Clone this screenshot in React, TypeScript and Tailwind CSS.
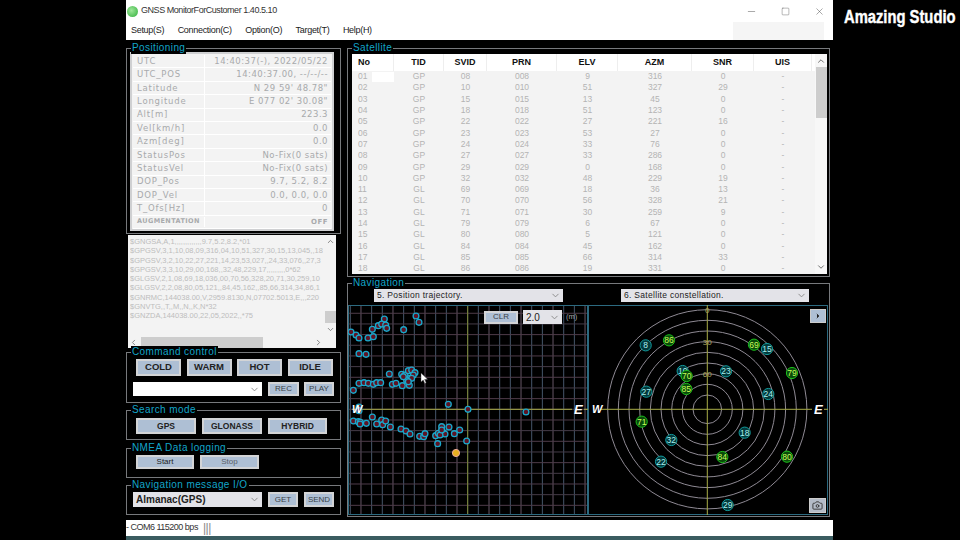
import React from 'react';
import { ChevronDown, ChevronUp, ChevronLeft, ChevronRight, Minus, Square, X, Camera } from 'lucide-react';

const font = "font-['Liberation_Sans',sans-serif]";
const mono = "font-['DejaVu_Sans',sans-serif]";

const posRows = [
  ['UTC', '14:40:37(-), 2022/05/22'],
  ['UTC_POS', '14:40:37.00, --/--/--'],
  ['Latitude', 'N  29 59\' 48.78"'],
  ['Longitude', 'E 077 02\' 30.08"'],
  ['Alt[m]', '223.3'],
  ['Vel[km/h]', '0.0'],
  ['Azm[deg]', '0.0'],
  ['StatusPos', 'No-Fix(0 sats)'],
  ['StatusVel', 'No-Fix(0 sats)'],
  ['DOP_Pos', '9.7, 5.2, 8.2'],
  ['DOP_Vel', '0.0, 0.0, 0.0'],
  ['T_Ofs[Hz]', '0'],
  ['AUGMENTATION', 'OFF'],
];

const nmea = [
  '$GNGSA,A,1,,,,,,,,,,,,,9.7,5.2,8.2,*01',
  '$GPGSV,3,1,10,08,09,316,04,10,51,327,30,15,13,045,,18',
  '$GPGSV,3,2,10,22,27,221,14,23,53,027,,24,33,076,,27,3',
  '$GPGSV,3,3,10,29,00,168,,32,48,229,17,,,,,,,,,0*62',
  '$GLGSV,2,1,08,69,18,036,00,70,56,328,20,71,30,259,10',
  '$GLGSV,2,2,08,80,05,121,,84,45,162,,85,66,314,34,86,1',
  '$GNRMC,144038.00,V,2959.8130,N,07702.5013,E,,,220',
  '$GNVTG,,T,,M,,N,,K,N*32',
  '$GNZDA,144038.00,22,05,2022,,*75',
];

const sats = [
  ['01', 'GP', '08', '008', '9', '316', '0'],
  ['02', 'GP', '10', '010', '51', '327', '29'],
  ['03', 'GP', '15', '015', '13', '45', '0'],
  ['04', 'GP', '18', '018', '51', '123', '0'],
  ['05', 'GP', '22', '022', '27', '221', '16'],
  ['06', 'GP', '23', '023', '53', '27', '0'],
  ['07', 'GP', '24', '024', '33', '76', '0'],
  ['08', 'GP', '27', '027', '33', '286', '0'],
  ['09', 'GP', '29', '029', '0', '168', '0'],
  ['10', 'GP', '32', '032', '48', '229', '19'],
  ['11', 'GL', '69', '069', '18', '36', '13'],
  ['12', 'GL', '70', '070', '56', '328', '21'],
  ['13', 'GL', '71', '071', '30', '259', '9'],
  ['14', 'GL', '79', '079', '6', '67', '0'],
  ['15', 'GL', '80', '080', '5', '121', '0'],
  ['16', 'GL', '84', '084', '45', '162', '0'],
  ['17', 'GL', '85', '085', '66', '314', '33'],
  ['18', 'GL', '86', '086', '19', '331', '0'],
];

// coordinates read off a 3x crop, see toChart
const track = [
  [118,117],[213,108],[222,127],[176,149],[100,137],[110,132],[122,135],[125,145],[82,148],[18,156],[33,165],[42,174],[69,174],[85,170],[42,221],[63,223],
  [133,282],[42,310],[57,308],[70,310],[85,313],[95,308],[107,308],[142,313],[153,310],[172,317],[193,316],[25,331],
  [170,283],[180,285],[190,272],[200,270],[210,278],[205,285],[195,295],[185,300],[175,290],[200,295],[190,305],
  [310,373],[369,388],[543,396],[42,381],[42,392],
  [25,423],[40,425],[46,427],[45,432],[64,430],[82,411],[95,432],[110,420],[113,434],[122,423],[136,441],[168,447],[183,453],[195,462],[224,469],[236,470],[240,461],
  [272,467],[280,460],[290,440],[295,458],[300,462],[285,465],[290,450],[312,441],[328,461],[344,450],[365,483],[278,491],
];

const constellation: [number, number, string, boolean][] = [
  [182, 196, '8', false],
  [252, 181, '86', true],
  [507, 194, '69', true],
  [546, 207, '15', false],
  [621, 279, '79', true],
  [293, 273, '10', false],
  [305, 288, '70', true],
  [304, 327, '85', true],
  [423, 274, '23', false],
  [184, 335, '27', false],
  [550, 342, '24', false],
  [170, 425, '71', true],
  [479, 458, '18', false],
  [259, 480, '32', false],
  [228, 545, '22', false],
  [412, 531, '84', true],
  [606, 530, '80', true],
  [428, 675, '29', false],
];

const toChart = (v: number) => v / 3;

function Group({ title, className, children }: { title: string; className?: string; children: React.ReactNode }) {
  return (
    <div className={`relative border border-[#77797c] ${className ?? ''}`}>
      <span className="absolute left-[4px] top-[-7px] whitespace-nowrap bg-black px-[1px] text-[10px] leading-[12px] tracking-[0.4px] text-[#12a5c9]">
        {title}
      </span>
      {children}
    </div>
  );
}

function Btn({ label, className }: { label: string; className?: string }) {
  return (
    <div className={`flex items-center justify-center border-2 border-[#d3d4d6] bg-[#aebfd4] whitespace-nowrap ${className ?? ''}`}>
      {label}
    </div>
  );
}

function Combo({ label, className }: { label?: string; className?: string }) {
  return (
    <div className={`flex items-center justify-between pl-[3px] pr-[2px] text-[#222] ${className ?? ''}`}>
      <span className="whitespace-nowrap">{label}</span>
      <ChevronDown size={11} className="text-[#888]" />
    </div>
  );
}

function CompassLetters() {
  return (
    <>
      <text x="4" y="108" fontSize="11" fontStyle="italic" fontWeight="700" fill="#fff" fontFamily="Liberation Sans">W</text>
      <text x="226" y="109" fontSize="13" fontStyle="italic" fontWeight="700" fill="#fff" fontFamily="Liberation Sans">E</text>
    </>
  );
}

function Trajectory() {
  const xs = Array.from({ length: 23 }, (_, i) => 2.3 + i * 10.67);
  const ys = Array.from({ length: 20 }, (_, i) => -2.4 + i * 10.67);
  return (
    <svg width="240" height="210" className="block">
      <rect width="240" height="210" fill="#000" />
      {xs.map((x, i) => (
        <line key={x} x1={x} y1="1" x2={x} y2="209" stroke={i % 3 === 1 ? '#665666' : '#45566a'} />
      ))}
      {ys.map((y, i) => (
        <line key={y} x1="1" y1={y} x2="239" y2={y} stroke={i % 2 ? '#4f3c4a' : '#453c48'} />
      ))}
      <rect x="0.5" y="0.5" width="239" height="209" fill="none" stroke="#2c6a80" />
      <line x1="119.7" y1="1" x2="119.7" y2="209" stroke="#7f8a34" />
      <line x1="4" y1="104.3" x2="224" y2="104.3" stroke="#a9ad48" />
      <line x1="236" y1="104.3" x2="240" y2="104.3" stroke="#a9ad48" />
      {track.map(([x, y], i) => (
        <circle key={i} cx={toChart(x) - 3} cy={toChart(y) - 25} r="2.9" fill="#5e1424" stroke="#1aa8cc" strokeWidth="1.3" />
      ))}
      <circle cx={toChart(333) - 3} cy={toChart(519) - 25} r="3.6" fill="#e8b020" stroke="#eba998" strokeWidth="1" />
      {/* mouse pointer */}
      <path d="M73 68 l0 9 l2.2 -2 l1.6 3.4 l1.4 -.7 l-1.6 -3.2 l3 -.2 z" fill="#fff" stroke="#333" strokeWidth="0.4" />
      <CompassLetters />
    </svg>
  );
}

function Constellation() {
  const cx = 119.3;
  const cy = 104.3;
  const radii = [14.3, 25, 35.6, 46.3, 57, 67.6, 78.3, 89, 99.6];
  return (
    <svg width="240" height="210" className="block">
      <rect x="0.5" y="0.5" width="239" height="209" fill="#000" stroke="#2c6a80" />
      {radii.map((r) => (
        <circle key={r} cx={cx} cy={cy} r={r} fill="none" stroke="#8f8a94" strokeWidth="1" />
      ))}
      <line x1={cx} y1="0" x2={cx} y2="210" stroke="#a9ad48" />
      <line x1="13" y1={cy} x2="224" y2={cy} stroke="#a9ad48" />
      <line x1="236" y1={cy} x2="240" y2={cy} stroke="#a9ad48" />
      <text x={cx} y="8" textAnchor="middle" fontSize="8" fill="#b0a860" fontFamily="Liberation Sans">0</text>
      <text x={cx} y="40" textAnchor="middle" fontSize="8" fill="#b0a860" fontFamily="Liberation Sans">30</text>
      <text x={cx} y="72" textAnchor="middle" fontSize="8" fill="#b0a860" fontFamily="Liberation Sans">60</text>
      {constellation.map(([x, y, label, gl]) => (
        <g key={label}>
          <circle cx={toChart(x) - 3} cy={toChart(y) - 25} r="5.6" fill={gl ? '#0a4a0a' : '#03383a'} stroke={gl ? '#1cc01c' : '#129a9c'} strokeWidth="1" />
          <text x={toChart(x) - 3} y={toChart(y) - 25 + 3} textAnchor="middle" fontSize="8.5" fill={gl ? '#c8ff5a' : '#a8f0f0'} fontFamily="Liberation Sans">
            {label}
          </text>
        </g>
      ))}
      <CompassLetters />
    </svg>
  );
}

export default function App() {
  return (
    <div className={`flex h-[540px] w-[960px] overflow-hidden bg-black ${font}`}>
      <div className="w-[126px] shrink-0" />
      <div className="flex w-[707px] shrink-0 flex-col">
        {/* title bar */}
        <div className="flex h-[22px] items-center bg-white pl-[1px]">
          <div className="h-[11px] w-[11px] rounded-full bg-[radial-gradient(circle_at_40%_40%,#9fe89a,#2fae3a)]" />
          <span className="ml-[3px] text-[9px] tracking-[-0.45px] text-[#333]">GNSS MonitorForCustomer 1.40.5.10</span>
          <div className="ml-auto flex items-center gap-[24px] pr-[8px] text-[#444]">
            <Minus size={11} strokeWidth={1} />
            <Square size={9} strokeWidth={1} />
            <X size={11} strokeWidth={1} />
          </div>
        </div>
        {/* menu */}
        <div className="flex h-[18px] items-center bg-white pl-[5px] text-[9px] tracking-[-0.3px] text-[#222]">
          <div className="flex gap-[13.5px]">
            <span>Setup(S)</span>
            <span>Connection(C)</span>
            <span>Option(O)</span>
            <span>Target(T)</span>
            <span>Help(H)</span>
          </div>
          <div className="ml-auto mr-[9px] h-full w-[91px] bg-[#f5f5f5]" />
        </div>

        <div className="flex h-[480px] gap-[6px] bg-black pt-[8px]">
          {/* left column */}
          <div className="flex w-[215px] shrink-0 flex-col">
            <Group title="Positioning" className="h-[186px] p-[3px]">
              <div className={`h-[179px] w-[204px] border-2 border-[#cfd0d2] bg-[#f3f3f3] p-[1px] tracking-[0.5px] text-[#a8aaac] ${mono}`}>
                {posRows.map(([k, v]) => (
                  <div key={k} className="flex h-[13.4px] items-center border-b border-white">
                    <span className={`w-[71px] whitespace-nowrap pl-[4px] ${k === 'AUGMENTATION' ? 'text-[6.5px] font-bold tracking-[0.4px]' : 'text-[8.5px] tracking-[0.8px]'}`}>{k}</span>
                    <span className={`flex-1 whitespace-nowrap border-l border-white pr-[3px] text-right ${k === 'AUGMENTATION' ? 'text-[7px] font-bold' : 'text-[8.5px]'}`}>{v}</span>
                  </div>
                ))}
              </div>
            </Group>

            {/* NMEA text */}
            <div className="relative ml-[2px] mt-[1px] h-[113px] w-[208px] overflow-hidden bg-[#f3f3f3] pl-[2px] pt-[2px]">
              {nmea.map((l) => (
                <div key={l} className="w-[193px] overflow-hidden whitespace-nowrap text-[7.5px] leading-[9.25px] text-[#bdbdbd]">
                  {l}
                </div>
              ))}
              <div className="absolute bottom-[12px] right-0 top-0 flex w-[12px] flex-col items-center">
                <ChevronUp size={9} className="mt-[2px] text-[#666]" />
                <div className="mt-[65px] h-[12px] w-[11px] bg-[#cdcdcd]" />
                <ChevronDown size={9} className="mt-[2px] text-[#666]" />
              </div>
              <div className="absolute bottom-0 left-0 right-[12px] flex h-[12px] items-center">
                <ChevronLeft size={9} className="ml-[1px] text-[#666]" />
                <div className="ml-[3px] h-[11px] w-[122px] bg-[#cdcdcd]" />
                <ChevronRight size={9} className="ml-auto mr-[1px] text-[#666]" />
              </div>
            </div>

            <Group title="Command control" className="mt-[4px] h-[51px]">
              <div className="flex gap-[5.5px] pl-[9px] pt-[6px] text-[9.5px] font-bold text-[#222]">
                <Btn label="COLD" className="h-[17px] w-[45px]" />
                <Btn label="WARM" className="h-[17px] w-[45px]" />
                <Btn label="HOT" className="h-[17px] w-[45px]" />
                <Btn label="IDLE" className="h-[17px] w-[45px]" />
              </div>
              <div className="mt-[6px] flex items-center pl-[6px] text-[8px] text-[#3a3f47]">
                <Combo className="h-[14px] w-[129px] bg-white" />
                <Btn label="REC" className="ml-[6px] h-[14px] w-[31px]" />
                <Btn label="PLAY" className="ml-[5px] h-[14px] w-[30px]" />
              </div>
            </Group>

            <Group title="Search mode" className="mt-[7px] h-[30px]">
              <div className="flex gap-[6px] pl-[9px] pt-[7px] text-[8.5px] font-bold text-[#222]">
                <Btn label="GPS" className="h-[16px] w-[60px]" />
                <Btn label="GLONASS" className="h-[16px] w-[60px]" />
                <Btn label="HYBRID" className="h-[16px] w-[59px]" />
              </div>
            </Group>

            <Group title="NMEA Data logging" className="mt-[8px] h-[30px]">
              <div className="flex gap-[6px] pl-[9px] pt-[6px] text-[8px]">
                <Btn label="Start" className="h-[14px] w-[58px] text-[#222]" />
                <Btn label="Stop" className="h-[14px] w-[59px] text-[#5a6068]" />
              </div>
            </Group>

            <Group title="Navigation message I/O" className="mt-[7px] h-[30px]">
              <div className="flex items-center pl-[6px] pt-[6px] text-[8px] text-[#3a3f47]">
                <Combo label="Almanac(GPS)" className="h-[15px] w-[129px] bg-[#e3e3e8] text-[10px] font-bold" />
                <Btn label="GET" className="ml-[6px] h-[15px] w-[30px]" />
                <Btn label="SEND" className="ml-[6px] h-[15px] w-[30px]" />
              </div>
            </Group>
          </div>

          {/* right column */}
          <div className="flex w-[483px] shrink-0 flex-col">
            <Group title="Satellite" className="h-[229px] pl-[4px] pt-[5px]">
              <div className="relative h-[220px] w-[475px] overflow-hidden bg-[#f3f3f3]">
                <div className="grid h-[17px] grid-cols-[42px_50px_43px_70px_61px_74px_62px_58px] bg-white text-[9px] font-bold text-[#111]">
                  {['No', 'TID', 'SVID', 'PRN', 'ELV', 'AZM', 'SNR', 'UIS'].map((h, i) => (
                    <span key={h} className={`flex items-center ${i === 0 ? 'pl-[6px]' : 'justify-center'} border-r border-[#eee]`}>{h}</span>
                  ))}
                </div>
                {sats.map((s) => (
                  <div key={s[0]} className="grid h-[11.3px] grid-cols-[42px_50px_43px_70px_61px_74px_62px_58px] items-center text-[8.5px] leading-[11px] text-[#b4b4b4]">
                    {s.map((c, i) => (
                      <span key={i} className={i === 0 ? 'pl-[6px]' : 'text-center'}>{c}</span>
                    ))}
                    <span className="text-center">-</span>
                  </div>
                ))}
                <div className="absolute left-[20px] top-[18px] h-[10px] w-[22px] bg-white" />
                <div className="absolute bottom-0 right-0 top-0 flex w-[12px] flex-col items-center bg-[#f7f7f7]">
                  <ChevronUp size={10} className="mt-[2px] text-[#555]" />
                  <div className="mt-[1px] h-[51px] w-[11px] bg-[#cdcdcd]" />
                  <ChevronDown size={10} className="mb-[2px] mt-auto text-[#555]" />
                </div>
              </div>
            </Group>

            <Group title="Navigation" className="mt-[6px] h-[234px] pt-[5px]">
              <div className="flex pl-[26px] text-[8.5px] tracking-[0.3px]">
                <Combo label="5. Position trajectory." className="h-[13px] w-[189px] bg-[#e3e3e8]" />
                <Combo label="6. Satellite constellation." className="ml-[58px] h-[13px] w-[188px] bg-[#e3e3e8]" />
              </div>
              <div className="relative mt-[3px] flex">
                <Trajectory />
                <Constellation />
                <div className="absolute left-[136px] top-[5px] flex items-center">
                  <Btn label="CLR" className="h-[13px] w-[34px] text-[8px] text-[#3a3f47]" />
                  <Combo label="2.0" className="ml-[5px] h-[14px] w-[39px] bg-[#e3e3e8] text-[10px]" />
                  <span className="ml-[4px] text-[7.5px] text-[#aaa]">(m)</span>
                </div>
                <div className="absolute left-[462px] top-[4px] flex h-[14px] w-[16px] items-center justify-center border border-[#ccc] bg-[#aebfd4]">
                  <ChevronRight size={8} fill="#222" className="text-[#222]" />
                </div>
                <div className="absolute left-[461px] top-[193px] flex h-[15px] w-[17px] items-center justify-center border border-[#ccc] bg-[#b4bcc8]">
                  <Camera size={11} className="text-[#333]" />
                </div>
              </div>
            </Group>
          </div>
        </div>

        {/* status bar */}
        <div className="flex h-[16px] items-center bg-white text-[9px] tracking-[-0.5px] text-[#333]">
          <span>- COM6 115200 bps</span>
          <span className="ml-[5px] text-[12px] leading-[12px] text-[#888]">|||</span>
        </div>
        <div className="h-[4px] bg-[#3a5c60]" />
      </div>
      <div className="flex-1 pl-[11px] pt-[4px]">
        <span className="inline-block origin-left scale-x-[0.82] whitespace-nowrap text-[18px] font-bold text-white [-webkit-text-stroke:0.4px_white]">
          Amazing Studio
        </span>
      </div>
    </div>
  );
}
